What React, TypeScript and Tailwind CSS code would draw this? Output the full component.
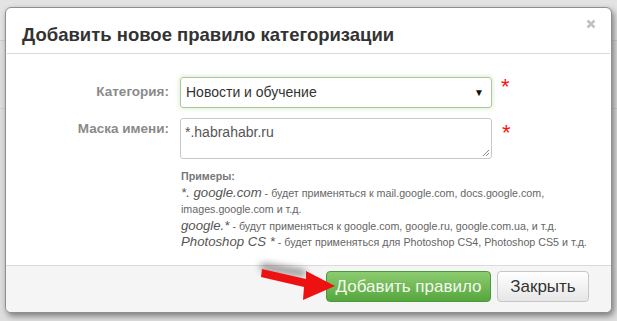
import React from "react";

export default function App() {
  const font = { fontFamily: '"Liberation Sans", Arial, sans-serif' };
  return (
    <div className="w-[617px] h-[321px] bg-[#dedede] relative overflow-hidden" style={font}>
      {/* faint background page */}
      <div className="absolute left-0 top-[0px] w-[617px] h-[40px] bg-[#e3e3e3]" />
      <div className="absolute left-0 top-[40px] w-[617px] h-px bg-[#cfcfcf]" />
      <div className="absolute left-0 top-[108px] w-[617px] h-px bg-[#cfcfcf]" />
      <div className="relative pt-[7px] pl-[5px]">
        <div className="w-[607px] h-[306px] bg-white border border-[#8f8f8f] rounded-[6px] shadow-[2px_3px_6px_rgba(0,0,0,0.45)] flex flex-col overflow-hidden">
          {/* header */}
          <div className="relative h-[46px] shrink-0 mx-[1px] border-b border-[#dadada] flex items-center pl-[15px]">
            <h3 className="text-[18.5px] font-bold text-[#333] leading-none mt-[9px]">Добавить новое правило категоризации</h3>
            <svg className="absolute right-[14px] top-[11px]" width="10" height="10" viewBox="0 0 10 10">
              <path d="M1.5 1.5 L8.5 8.5 M8.5 1.5 L1.5 8.5" stroke="#c2c2c2" strokeWidth="2.6" />
            </svg>
          </div>
          {/* body */}
          <div className="flex-1 pt-[23px]">
            <div className="grid grid-cols-[163px_1fr] gap-x-[11px] gap-y-[10px] items-start">
              <label className="text-right text-[13.5px] font-bold text-[#8a8a8a] pt-[5px]">Категория:</label>
              <div className="flex items-start">
                <div className="w-[312px] h-[31px] border border-[#a9cc94] rounded-[3px] shadow-[0_0_5px_rgba(120,180,90,0.35)] flex items-center justify-between pl-[5px] pr-[7px]">
                  <span className="text-[14px] text-[#333]">Новости и обучение</span>
                  <span className="text-[10px] text-[#111]">▼</span>
                </div>
                <span className="ml-[9px] -mt-[1px] text-[22px] text-[#ff1010] leading-none">*</span>
              </div>
              <label className="text-right text-[13.5px] font-bold text-[#8a8a8a] pt-[1px]">Маска имени:</label>
              <div className="flex items-start">
                <div className="relative w-[312px] h-[41px] border border-[#c8c8c8] rounded-[3px] pl-[4px] pt-[1px]">
                  <span className="text-[14px] text-[#555]">*.habrahabr.ru</span>
                  <svg className="absolute right-[1px] bottom-[1px]" width="8" height="8" viewBox="0 0 8 8">
                    <path d="M7 1 L1 7 M7 4 L4 7" stroke="#888" strokeWidth="1" />
                  </svg>
                </div>
                <span className="ml-[10px] mt-[4px] text-[22px] text-[#ff1010] leading-none">*</span>
              </div>
            </div>
            <div className="ml-[175px] mt-[9px] text-[10.7px] text-[#666] leading-[16.5px] whitespace-nowrap">
              <div className="font-bold text-[10.7px] text-[#777]">Примеры:</div>
              <div><i className="text-[13.2px] text-[#555] font-normal">*. google.com</i> - будет применяться к mail.google.com, docs.google.com,</div>
              <div>images.google.com и т.д.</div>
              <div><i className="text-[13.2px] text-[#555] font-normal">google.*</i> - будут применяться к google.com, google.ru, google.com.ua, и т.д.</div>
              <div><i className="text-[13.2px] text-[#555] font-normal">Photoshop CS *</i> - будет применяться для Photoshop CS4, Photoshop CS5 и т.д.</div>
            </div>
          </div>
          {/* footer */}
          <div className="relative h-[47px] shrink-0 border-t border-[#dadada] bg-[#f5f5f5] flex justify-end items-start pt-[5px] pr-[22px] gap-[6px]">
            <button className="relative w-[165px] h-[31px] rounded-[4px] border border-[#4a9a3a] bg-gradient-to-b from-[#8ccc70] to-[#55a63d] text-[#f3f8ee] text-[17px] leading-none">Добавить правило</button>
            <button className="w-[92px] h-[31px] rounded-[4px] border border-[#c6c6c6] bg-gradient-to-b from-white to-[#e6e6e6] text-[#333] text-[17px] leading-none">Закрыть</button>
          </div>
        </div>
      </div>
      {/* red arrow */}
      <svg className="absolute left-[250px] top-[256px] z-10" width="100" height="52" viewBox="0 0 100 52">
        <defs>
          <filter id="blur" x="-40%" y="-150%" width="180%" height="400%">
            <feGaussianBlur stdDeviation="3.5" />
          </filter>
        </defs>
        <path d="M14 11 L52 17" stroke="rgba(0,0,0,0.38)" strokeWidth="8" strokeLinecap="round" filter="url(#blur)" />
        <path d="M12 13 L56 23 L56 15 L85 30 L53 44 L54 31 L11 21 Z" fill="#ee1111" />
      </svg>
    </div>
  );
}
